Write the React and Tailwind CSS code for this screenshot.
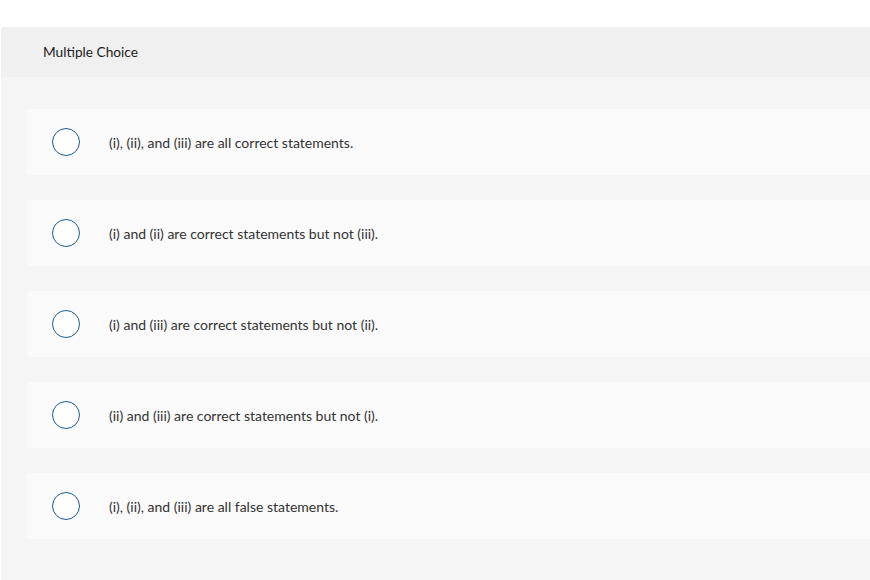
import React from 'react';

const options = [
  '(i), (ii), and (iii) are all correct statements.',
  '(i) and (ii) are correct statements but not (iii).',
  '(i) and (iii) are correct statements but not (ii).',
  '(ii) and (iii) are correct statements but not (i).',
  '(i), (ii), and (iii) are all false statements.',
];

export default function App() {
  return (
    <div className="bg-white pt-[27px] pl-px h-[580px] overflow-hidden" style={{ fontFamily: 'Lato, "Open Sans", sans-serif' }}>
      <div className="rounded-tl-[4px] overflow-hidden bg-[#f5f5f5] h-[553px]">
        <div className="bg-[#f0f0f0] h-[50px] flex items-center pl-[42px] pt-[1px] text-[13.7px] text-[#222]">
          Multiple Choice
        </div>
        <div className="pt-[32px] pl-[26px] flex flex-col gap-[25px]">
          {options.map((text, i) => (
            <label key={i} className="bg-[#fafafa] rounded-l-[4px] h-[66px] flex items-center cursor-pointer">
              <span className="ml-[25px] w-[28px] h-[28px] rounded-full border-[1.5px] border-[#1d5b94] bg-white shrink-0" />
              <span className="ml-[29px] text-[14px] text-[#333]">{text}</span>
            </label>
          ))}
        </div>
      </div>
    </div>
  );
}
